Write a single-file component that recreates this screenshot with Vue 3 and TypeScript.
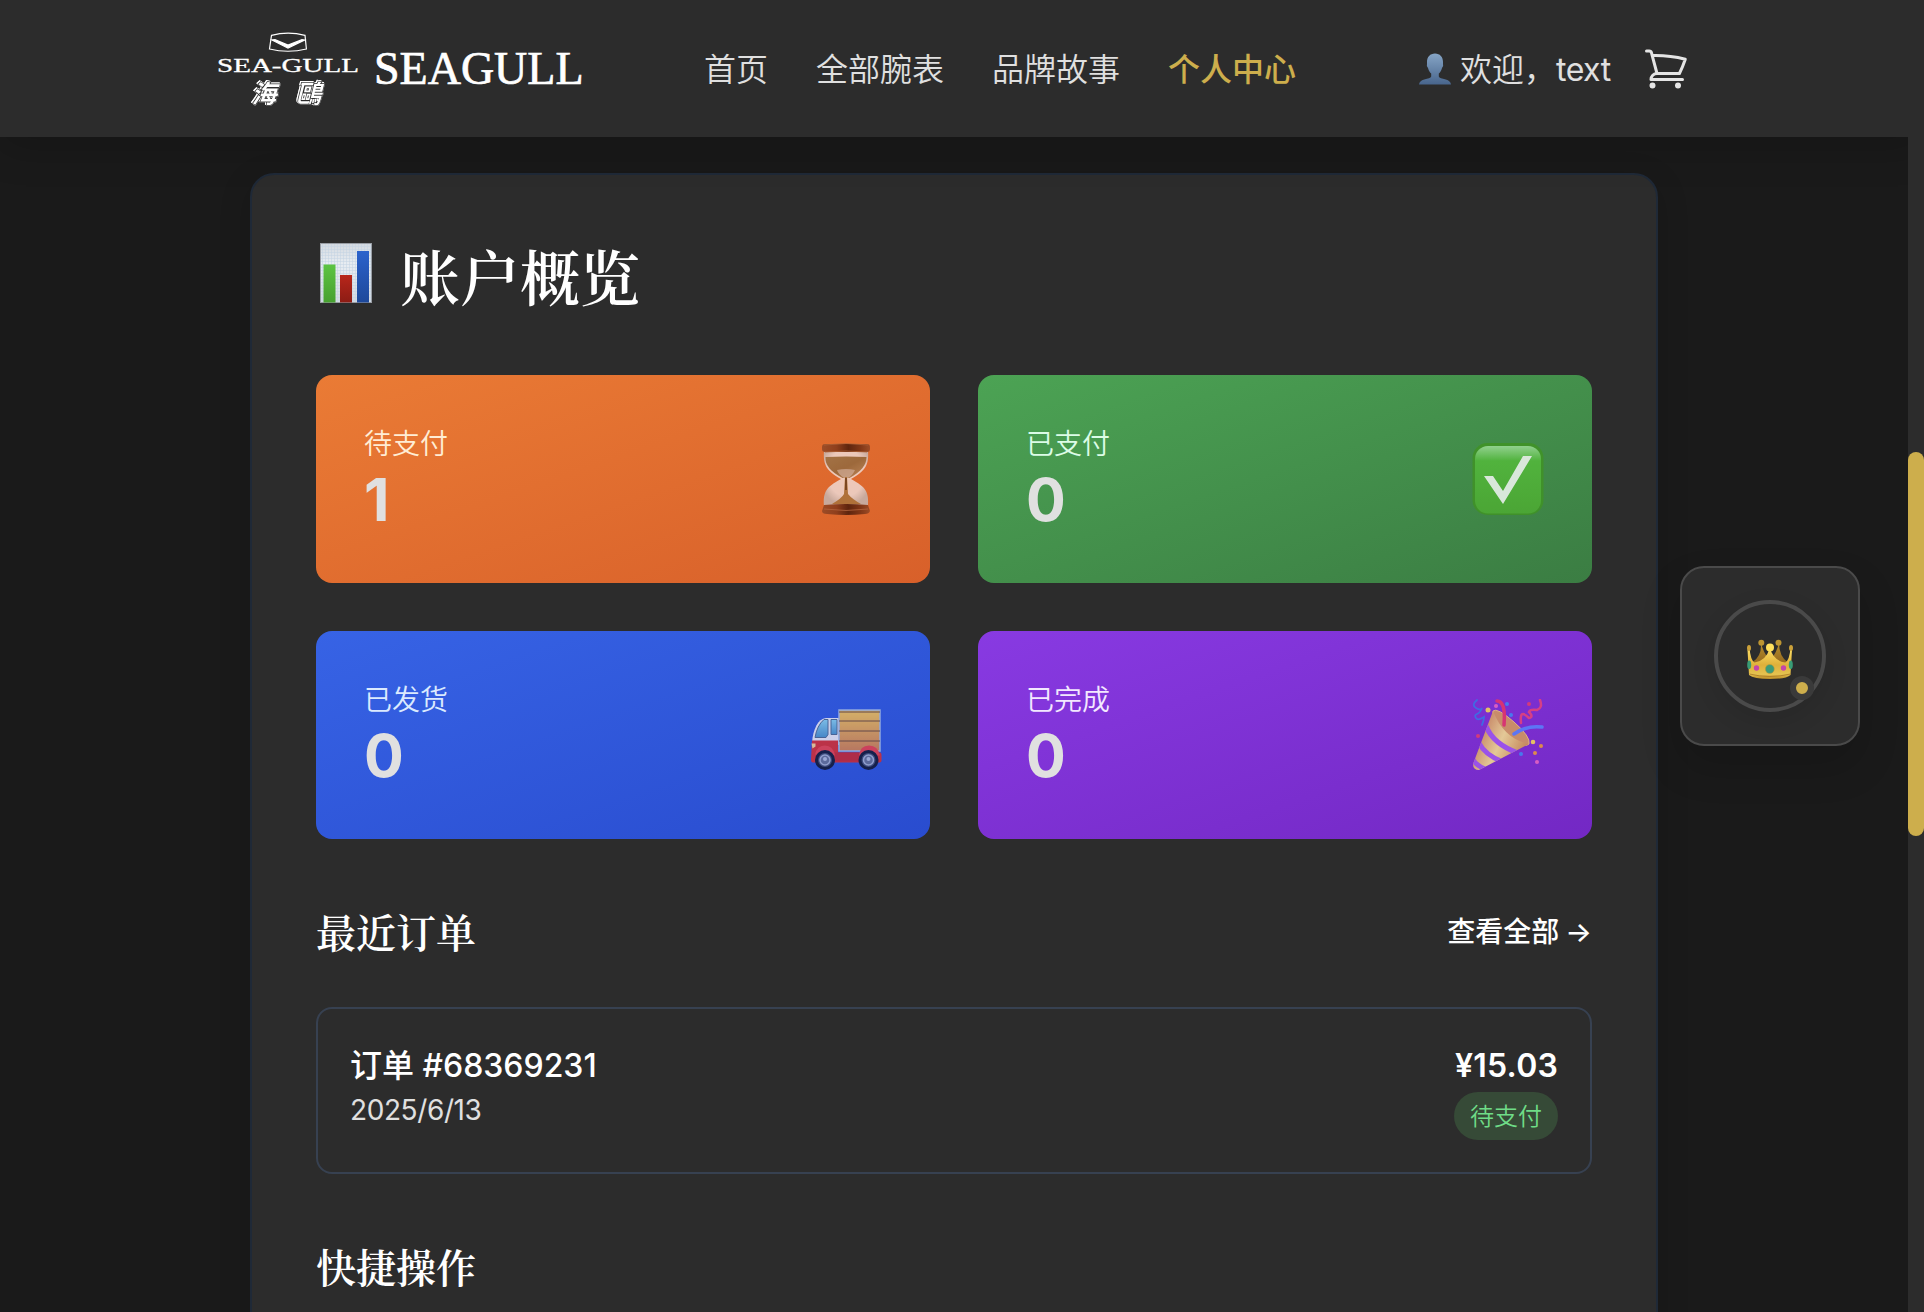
<script setup lang="ts">
interface NavItem { label: string; active?: boolean }
interface Stat { key: string; label: string; value: number }

const nav: NavItem[] = [
  { label: '首页' },
  { label: '全部腕表' },
  { label: '品牌故事' },
  { label: '个人中心', active: true },
]

const stats: Stat[] = [
  { key: 'pending', label: '待支付', value: 1 },
  { key: 'paid', label: '已支付', value: 0 },
  { key: 'shipped', label: '已发货', value: 0 },
  { key: 'done', label: '已完成', value: 0 },
]

const order = { id: '68369231', date: '2025/6/13', total: '¥15.03', status: '待支付' }
</script>

<template>
  <div class="page">
    <header class="header">
      <div class="brand">
        <svg class="logo" width="144" height="76" viewBox="0 0 144 76">
          <g fill="none" stroke="#fff" stroke-width="1.2">
            <path d="M55.500 4.300Q72 0 89 4.300L90.400 18Q72 22.500 53.500 18Z" />
          </g>
          <path d="M56 9L72 17L88.500 9L86 8.700L72 14L59 8.700Z" fill="#fff" stroke="#fff" stroke-width="1.2" />
          <text class="logo-latin" x="1" y="40.500" textLength="142" lengthAdjust="spacingAndGlyphs">SEA-GULL</text>
          <g class="logo-cjk">
            <text x="35.500" y="71.500">海</text>
            <text x="80" y="71.500">鷗</text>
          </g>
        </svg>
        <span class="brand-name">SEAGULL</span>
      </div>
      <nav class="nav">
        <a v-for="item in nav" :key="item.label" :class="{ active: item.active }">{{ item.label }}</a>
      </nav>
      <div class="user">
        <svg width="32" height="32" viewBox="0 0 32 32">
          <defs>
            <linearGradient id="bust" x1="0" y1="0" x2="0" y2="1">
              <stop offset="0" stop-color="#86a5c6" /><stop offset="1" stop-color="#48658c" />
            </linearGradient>
          </defs>
          <path fill="url(#bust)" d="M16 .5C11 .5 8 4 8 9v2q-.8 2.500 1 4c.8 3 2 4.500 3.200 5.500v3c-.4 1.500-3 2-7 3C2 27.500 .3 29 0 31.500h32c-.3-2.500-2-4-5.200-5-4-1-6.600-1.500-7-3v-3c1.200-1 2.400-2.500 3.200-5.500q1.800-1.500 1-4V9c0-5-3-8.500-8-8.500Z" />
        </svg>
        <span class="welcome">欢迎，<span class="name">text</span></span>
        <svg class="cart" width="48" height="48" viewBox="0 0 24 24" fill="none" stroke="currentColor" stroke-width="1.5" stroke-linecap="round" stroke-linejoin="round">
          <path d="M2.250 3h1.386c.51 0 .955.343 1.087.835l.383 1.437M7.500 14.250a3 3 0 0 0-3 3h15.750m-12.750-3h11.218c1.121-2.300 2.100-4.684 2.924-7.138a60.114 60.114 0 0 0-16.536-1.840M7.500 14.250 5.106 5.272M6 20.250a.75.75 0 1 1-1.500 0 .75.75 0 0 1 1.500 0Zm12.750 0a.75.75 0 1 1-1.500 0 .75.75 0 0 1 1.500 0Z" />
        </svg>
      </div>
    </header>

    <main class="panel">
      <h1 class="title">
        <svg width="60" height="60" viewBox="0 0 60 60">
          <defs>
            <pattern id="grid" width="3" height="3" patternUnits="userSpaceOnUse">
              <path d="M0 .5h3M.5 0v3" stroke="#c3d2e3" stroke-width=".5" />
            </pattern>
            <linearGradient id="paper" x1="0" y1="0" x2="0" y2="1">
              <stop offset="0" stop-color="#d3d9e0" /><stop offset=".35" stop-color="#e8edf2" /><stop offset="1" stop-color="#d5dae1" />
            </linearGradient>
            <linearGradient id="bar-g" x1="0" y1="0" x2="0" y2="1"><stop offset="0" stop-color="#5dc442" /><stop offset="1" stop-color="#47a030" /></linearGradient>
            <linearGradient id="bar-r" x1="0" y1="0" x2="0" y2="1"><stop offset="0" stop-color="#b8261b" /><stop offset="1" stop-color="#8c1c14" /></linearGradient>
            <linearGradient id="bar-b" x1="0" y1="0" x2="0" y2="1"><stop offset="0" stop-color="#2c63cc" /><stop offset="1" stop-color="#1d489a" /></linearGradient>
          </defs>
          <rect x="4.500" y=".5" width="51" height="59" fill="url(#paper)" />
          <rect x="4.500" y=".5" width="51" height="59" fill="url(#grid)" stroke="#999ea5" />
          <rect x="7.500" y="21.500" width="12" height="38" fill="url(#bar-g)" />
          <rect x="24" y="32" width="12" height="27.500" fill="url(#bar-r)" />
          <rect x="41" y="8" width="12" height="51.500" fill="url(#bar-b)" />
        </svg>
        <span>账户概览</span>
      </h1>

      <section class="stats">
        <article v-for="s in stats" :key="s.key" class="stat" :class="s.key">
          <div class="stat-text">
            <div class="stat-label">{{ s.label }}</div>
            <div class="stat-value">{{ s.value }}</div>
          </div>
          <svg v-if="s.key === 'pending'" class="emoji" viewBox="0 0 72 72">
            <defs>
              <linearGradient id="wood" x1="0" y1="0" x2="1" y2="0"><stop offset="0" stop-color="#8d4626" /><stop offset=".3" stop-color="#7c3519" /><stop offset=".55" stop-color="#3f1507" /><stop offset=".8" stop-color="#6a2b12" /><stop offset="1" stop-color="#8d4626" /></linearGradient>
              <linearGradient id="sand" x1="0" y1="0" x2="1" y2="1"><stop offset="0" stop-color="#94754c" /><stop offset=".5" stop-color="#8d693f" /><stop offset="1" stop-color="#b58d63" /></linearGradient>
              <radialGradient id="glass" cx=".5" cy=".4" r=".6"><stop offset="0" stop-color="#f5e2da" /><stop offset=".7" stop-color="#efe0de" /><stop offset="1" stop-color="#c3bab8" /></radialGradient>
            </defs>
            <path d="M14 8h44c1 13-2 20-17 28 15 8 18 13 17 27H14c-1-14 2-19 17-27C16 28 13 21 14 8Z" fill="url(#glass)" />
            <path d="M15.500 14q21-1 41 0c0 8-5 14-17 21h-7C20 28 15 22 15.500 14Z" fill="url(#sand)" />
            <path d="M27 27q9-2 18 0-2 5-7 8h-4q-6-4-7-8Z" fill="#cfbeb4" opacity=".7" />
            <path d="M35 34h2l1 17q4 5 13 10H22q10-6 12-10Z" fill="#a5743d" />
            <path d="M35 35h2v12h-2Z" fill="#65401f" />
            <rect x="12" y="1" width="48" height="8" rx="3" fill="url(#wood)" />
            <path d="M14 2q22-3 44 0M15 9q21-2 42 0" stroke="#a15f3a" stroke-width=".8" fill="none" />
            <path d="M14 62q22-2 44 0l2 6q-1 3-5 3-19 2-38 0-5 0-5-3Z" fill="url(#wood)" />
            <path d="M14 66q22 3 44 0" stroke="#a86543" stroke-width=".8" fill="none" />
          </svg>
          <svg v-else-if="s.key === 'paid'" class="emoji" viewBox="0 0 72 72">
            <defs>
              <linearGradient id="tile" x1="0" y1="0" x2="0" y2="1"><stop offset="0" stop-color="#a5e29f" /><stop offset=".22" stop-color="#55bd3b" /><stop offset="1" stop-color="#4fae31" /></linearGradient>
            </defs>
            <rect x=".5" y="0" width="71" height="72" rx="15" fill="#409423" />
            <rect x="3" y="3" width="66" height="67.500" rx="13" fill="url(#tile)" />
            <path d="M12 33h9l10 15 20-35h9L31 61Z" fill="#fff" />
          </svg>
          <svg v-else-if="s.key === 'shipped'" class="emoji" viewBox="0 0 72 72">
            <defs>
              <linearGradient id="cargo" x1="0" y1="0" x2="0" y2="1"><stop offset="0" stop-color="#ffc94d" /><stop offset="1" stop-color="#d98044" /></linearGradient>
              <linearGradient id="pane" x1="0" y1="0" x2="0" y2="1"><stop offset="0" stop-color="#8fd6ea" /><stop offset="1" stop-color="#4d93c4" /></linearGradient>
            </defs>
            <g transform="translate(0 3.500)">
              <path d="M2 40C3 27 8 16 16 15.500h13v27H2Z" fill="#f4efef" />
              <path d="M5 35q2-12 9-18h4v15l-2 3Z" fill="url(#pane)" stroke="#4f6888" />
              <path d="M21 17h6v15h-6Z" fill="url(#pane)" stroke="#4f6888" />
              <path d="M2 38h26v12h42q1.500 0 1.500 3v5q0 2-2 2H3q-2 0-2-3Z" fill="#df2a25" />
              <path d="M29 7.500h41v41H29Z" fill="url(#cargo)" stroke="#a9bde0" stroke-width="1.500" />
              <path d="M29 9.500h41M29 18.500h41M29 28.500h41M29 38.500h41" stroke="#704426" fill="none" />
              <path d="M5 52q2-9 10-9t10 10ZM49 53q1-10 10-10 9 0 11 10Z" fill="#f33e40" />
              <path d="M1.500 41h4v3l-3 2Z" fill="#ffd58a" />
              <path d="M25 50h24v9H25Z" fill="#cf2325" />
              <g stroke="#10142a" stroke-width="3" fill="#424b68"><circle cx="15" cy="57.500" r="8.500" /><circle cx="58.500" cy="57.500" r="8.500" /></g>
              <g stroke="#aab2cc" stroke-width="1.500" fill="#68718f"><circle cx="15" cy="57.500" r="5" /><circle cx="58.500" cy="57.500" r="5" /></g>
              <g fill="#b7bfd6"><circle cx="15" cy="56.500" r="2" /><circle cx="58.500" cy="56.500" r="2" /></g>
            </g>
          </svg>
          <svg v-else class="emoji" viewBox="0 0 72 72">
            <defs>
              <linearGradient id="cone" x1="0" y1="0" x2="1" y2=".5"><stop offset="0" stop-color="#cf9f45" /><stop offset=".3" stop-color="#e0ab58" /><stop offset=".6" stop-color="#fff08a" /><stop offset="1" stop-color="#d9a042" /></linearGradient>
              <clipPath id="cone-clip"><path d="M21 12 1 65q0 6 6 6l50-26Q32 40 21 12Z" /></clipPath>
            </defs>
            <path d="M21 12q4-4 21 11t15 22q-3 5-21-9T21 12Z" fill="#dca452" stroke="#f5cf74" />
            <path d="M21 12 1 65q0 6 6 6l50-26Q32 40 21 12Z" fill="url(#cone)" />
            <g clip-path="url(#cone-clip)" fill="none" stroke="#a35cf0" stroke-width="5"><path d="M14 27q7 18 32 27M7 44q6 12 24 19M0 59q3 7 13 11" /></g>
            <g fill="none" stroke-linecap="round">
              <path d="M5 1Q-1 6 4 9t6 0q-2 5-5 6t-1 4 8-1q0 3-2 8" stroke="#3279e8" stroke-width="1.800" />
              <path d="M25 2q9 0 7 24" stroke="#ef365d" stroke-width="3.500" />
              <path d="M49 24q-1-9 2-9 2 0 6 4 5-1 0-6 1-3 8-2 6-2 3-10" stroke="#ed4473" stroke-width="2.500" />
              <path d="M42 35q13-9 28-7" stroke="#5688ff" stroke-width="3.500" />
            </g>
            <g fill="#f06ac1"><circle cx="24" cy="7" r="2" /><circle cx="6" cy="37" r="2" fill="#e83e67" /><circle cx="57" cy="5" r="2" fill="#e83e67" /><circle cx="65" cy="63" r="2" /></g>
            <g fill="#3c8df5"><circle cx="35" cy="5" r="2" /><circle cx="39" cy="16" r="2" /><circle cx="49" cy="55" r="2" /></g>
            <g fill="#ffe44c"><circle cx="16" cy="11" r="2.500" /><circle cx="61" cy="43" r="2.300" /><circle cx="69" cy="47" r="2" fill="#f5a12e" /><circle cx="63" cy="54" r="2" fill="#f5a12e" /></g>
          </svg>
        </article>
      </section>

      <div class="section-head">
        <h2>最近订单</h2>
        <a class="more">查看全部 →</a>
      </div>
      <div class="order">
        <div>
          <div class="order-id">订单 #{{ order.id }}</div>
          <div class="order-date">{{ order.date }}</div>
        </div>
        <div class="order-side">
          <div class="order-total">{{ order.total }}</div>
          <span class="badge">{{ order.status }}</span>
        </div>
      </div>
      <h2 class="quick">快捷操作</h2>
    </main>

    <aside class="float">
      <div class="ring">
        <svg width="48" height="42" viewBox="0 0 48 42">
          <defs>
            <linearGradient id="gold" x1="0" y1="0" x2="0" y2="1"><stop offset="0" stop-color="#ffe268" /><stop offset=".55" stop-color="#dfb03a" /><stop offset=".85" stop-color="#e5c350" /><stop offset="1" stop-color="#b98a25" /></linearGradient>
            <linearGradient id="gold-back" x1="0" y1="0" x2="0" y2="1"><stop offset="0" stop-color="#b88f2b" /><stop offset="1" stop-color="#8b5f1e" /></linearGradient>
          </defs>
          <path d="M15 3.500q1 14-9 20l6 5 12-5 12 5 6-5q-9-6-9-20-2 10-9 18-7-8-9-18Z" fill="url(#gold-back)" />
          <circle cx="15.300" cy="3.800" r="3" fill="#bd9532" /><circle cx="32.500" cy="3.800" r="3" fill="#bd9532" />
          <path d="M3.500 9q1 12 5 14.500Q20 22 23.800 9q4 13 15.500 14.500Q43.500 21 44.500 9l1.500 2-1.500 25q-4 4-20.500 4T3 36L1.500 11Z" fill="url(#gold)" />
          <circle cx="24" cy="8.500" r="4" fill="#ffe05c" /><ellipse cx="3" cy="9" rx="2" ry="3" fill="#cba13a" /><ellipse cx="45" cy="9" rx="2" ry="3" fill="#cba13a" />
          <path d="M3.500 35q20 5 41 0" stroke="#a87621" fill="none" stroke-width=".8" />
          <circle cx="23.800" cy="30" r="4.500" fill="#3d9b78" stroke="#c99a32" stroke-width=".5" />
          <circle cx="10.500" cy="29" r="2.700" fill="#c445a8" /><circle cx="37.500" cy="29" r="2.700" fill="#c445a8" />
          <ellipse cx="3.200" cy="25.700" rx="2" ry="4.300" fill="#389b75" /><ellipse cx="44.800" cy="25.700" rx="2" ry="4.300" fill="#389b75" />
        </svg>
        <span class="dot"></span>
      </div>
    </aside>
    <div class="scroll"><div class="thumb"></div></div>
  </div>
</template>

<style>
body { background: #1a1a1a; overflow: hidden; }
</style>

<style scoped>
* { box-sizing: border-box; }
.page {
  position: relative;
  width: 1924px;
  height: 1312px;
  overflow: hidden;
  background: #1a1a1a;
  color: #e0e0e0;
  font-family: Inter, "Noto Sans CJK SC", sans-serif;
}
h1, h2 { margin: 0; font-weight: 600; color: #fff; font-family: "Noto Serif CJK SC", "Songti SC", "Noto Sans CJK SC", serif; }
.header {
  position: relative;
  z-index: 1;
  display: flex;
  align-items: center;
  height: 137px;
  padding-left: 216px;
  background: #2c2c2c;
  box-shadow: 0 8px 40px rgba(0, 0, 0, .2);
}
.brand { display: flex; align-items: center; gap: 14px; width: 488px; }
.logo { flex: none; margin-top: 1px; overflow: visible; }
.logo-latin { font: 19.500px "Liberation Serif", serif; fill: #fff; stroke: #fff; stroke-width: .3px; }
.logo-cjk {
  font: italic 700 25px "Noto Sans CJK TC", sans-serif;
  fill: #fff;
  stroke: #2c2c2c;
  stroke-width: 1.500px;
  paint-order: stroke;
  filter: drop-shadow(.8px .8px 0 #fff) drop-shadow(-.8px -.6px 0 #fff);
}
.brand-name { font: 46px/60px "Liberation Serif", serif; color: #fff; -webkit-text-stroke: .7px #fff; }
.nav { display: flex; gap: 48px; width: 715px; padding-top: 2px; font-size: 32px; line-height: 48px; font-weight: 350; white-space: nowrap; }
.nav a { color: #e0e0e0; }
.nav .active { color: #cdae4c; font-weight: 500; }
.user { display: flex; align-items: center; }
.welcome { margin-left: 9px; padding-top: 2px; font-size: 32px; line-height: 48px; font-weight: 350; white-space: nowrap; width: 182px; }
.name { font-weight: 400; letter-spacing: -.5px; }
.cart { color: #e5e5e5; }
.panel {
  width: 1408px;
  height: 1300px;
  margin: 36px 0 0 250px;
  padding: 64px;
  border: 2px solid #1f2937;
  border-radius: 24px;
  background: #2c2c2c;
  box-shadow: 0 8px 32px rgba(0, 0, 0, .15);
}
.title { display: flex; align-items: center; gap: 24px; height: 72px; margin-bottom: 64px; font-size: 60px; line-height: 72px; }
.title svg { margin-top: -4px; }
.stats { display: grid; grid-template-columns: 1fr 1fr; gap: 48px; }
.stat { display: flex; justify-content: space-between; align-items: center; height: 208px; padding: 48px; border-radius: 16px; }
.pending { background: linear-gradient(to bottom right, #ea7b35, #d8602a); --label: #ffedd5; }
.paid { background: linear-gradient(to bottom right, #4ca354, #3b7d43); --label: #dcfce7; }
.shipped { background: linear-gradient(to bottom right, #3763e5, #294ccf); --label: #dbeafe; }
.done { background: linear-gradient(to bottom right, #883ae2, #7328c4); --label: #f3e8ff; }
.stat-text { padding-top: 2px; }
.stat-label { font-size: 28px; line-height: 40px; font-weight: 350; color: var(--label); }
.stat-value { font-size: 59px; line-height: 72px; font-weight: 700; color: #e0e0e0; }
.emoji { width: 72px; height: 72px; opacity: .8; }
.section-head { display: flex; justify-content: space-between; align-items: center; height: 56px; margin: 64px 0 48px; }
h2 { font-size: 40px; line-height: 56px; }
.more { padding-top: 1px; color: #fff; font-size: 28px; line-height: 40px; font-weight: 500; word-spacing: -1.500px; }
.order {
  display: flex;
  justify-content: space-between;
  height: 167px;
  padding: 33px 32px 31px;
  border: 2px solid #374151;
  border-radius: 16px;
}
.order-id, .order-total { font-size: 32px; line-height: 48px; font-weight: 500; color: #fff; }
.order-date { font-size: 28px; line-height: 40px; letter-spacing: -.4px; }
.order-side { display: flex; flex-direction: column; align-items: flex-end; gap: 2px; }
.order-total { font-weight: 600; letter-spacing: .2px; }
.badge { padding: 9px 16px 7px; border-radius: 24px; background: #364a37; color: #6fdc87; font-size: 24px; line-height: 32px; font-weight: 350; }
.quick { margin-top: 64px; }
.float {
  position: absolute;
  left: 1680px;
  top: 566px;
  display: flex;
  align-items: center;
  justify-content: center;
  width: 180px;
  height: 180px;
  border: 2px solid #4a4a4a;
  border-radius: 24px;
  background: #2c2c2c;
  box-shadow: 0 20px 40px rgba(0, 0, 0, .15);
}
.ring {
  position: relative;
  display: flex;
  align-items: center;
  justify-content: center;
  width: 112px;
  height: 112px;
  border: 4px solid #4a4a4a;
  border-radius: 50%;
  background: #2c2c2c;
  box-shadow: 0 8px 24px rgba(0, 0, 0, .1);
}
.ring svg { margin-top: 8px; }
.dot { position: absolute; right: 8px; bottom: 8px; width: 24px; height: 24px; border: 6px solid #3a3a3a; border-radius: 50%; background: #cdae4c; }
.scroll { position: absolute; top: 0; right: 0; width: 16px; height: 1312px; padding-top: 452px; background: #2c2c2c; z-index: 2; }
.thumb { height: 384px; border-radius: 8px; background: #cdae4c; }
</style>
